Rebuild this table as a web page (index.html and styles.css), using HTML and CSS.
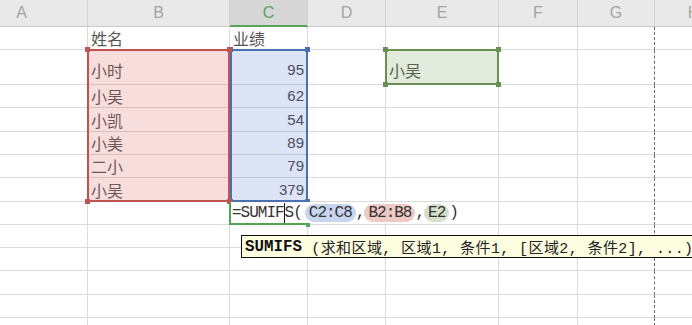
FILE: index.html
```html
<!DOCTYPE html>
<html lang="zh-CN">
<head>
<meta charset="utf-8">
<title>SUMIFS</title>
<link rel="stylesheet" href="styles.css">
</head>
<body>
<div class="sheet">
  <div class="cells">
    <div class="h">A</div><div class="h">B</div><div class="h on">C</div><div class="h">D</div><div class="h">E</div><div class="h">F</div><div class="h">G</div><div class="h">H</div>

    <div class="c"></div><div class="c">姓名</div><div class="c">业绩</div><div class="c"></div><div class="c"></div><div class="c"></div><div class="c"></div><div class="c"></div>
    <div class="c"></div><div class="c tall">小时</div><div class="c num tall">95</div><div class="c"></div><div class="c tall">小吴</div><div class="c"></div><div class="c"></div><div class="c"></div>
    <div class="c"></div><div class="c">小吴</div><div class="c num">62</div><div class="c"></div><div class="c"></div><div class="c"></div><div class="c"></div><div class="c"></div>
    <div class="c"></div><div class="c">小凯</div><div class="c num">54</div><div class="c"></div><div class="c"></div><div class="c"></div><div class="c"></div><div class="c"></div>
    <div class="c"></div><div class="c">小美</div><div class="c num">89</div><div class="c"></div><div class="c"></div><div class="c"></div><div class="c"></div><div class="c"></div>
    <div class="c"></div><div class="c">二小</div><div class="c num">79</div><div class="c"></div><div class="c"></div><div class="c"></div><div class="c"></div><div class="c"></div>
    <div class="c"></div><div class="c">小吴</div><div class="c num">379</div><div class="c"></div><div class="c"></div><div class="c"></div><div class="c"></div><div class="c"></div>
    <div class="c"></div><div class="c"></div><div class="c"></div><div class="c"></div><div class="c"></div><div class="c"></div><div class="c"></div><div class="c"></div>
    <div class="c"></div><div class="c"></div><div class="c"></div><div class="c"></div><div class="c"></div><div class="c"></div><div class="c"></div><div class="c"></div>
    <div class="c"></div><div class="c"></div><div class="c"></div><div class="c"></div><div class="c"></div><div class="c"></div><div class="c"></div><div class="c"></div>
    <div class="c"></div><div class="c"></div><div class="c"></div><div class="c"></div><div class="c"></div><div class="c"></div><div class="c"></div><div class="c"></div>
    <div class="c"></div><div class="c"></div><div class="c"></div><div class="c"></div><div class="c"></div><div class="c"></div><div class="c"></div><div class="c"></div>
    <div class="c"></div><div class="c"></div><div class="c"></div><div class="c"></div><div class="c"></div><div class="c"></div><div class="c"></div><div class="c"></div>
  </div>

  <div class="marks">
    <div class="rng blue"><i class="hdl tl"></i><i class="hdl tr"></i><i class="hdl bl"></i><i class="hdl br"></i></div>
    <div class="rng red"><i class="hdl tl"></i><i class="hdl tr"></i><i class="hdl bl"></i><i class="hdl br"></i></div>
    <div class="rng green"><i class="hdl tl"></i><i class="hdl tr"></i><i class="hdl bl"></i><i class="hdl br"></i></div>
    <div class="ed">
      <div class="fx">=SUMIF<span class="caret"></span>S(<span class="p pb first">C2:C8</span>,<span class="p pr">B2:B8</span>,<span class="p pg">E2</span>)</div>
      <i class="hdl ebr"></i>
    </div>
  </div>
</div>

<div class="tip"><b>SUMIFS</b>&nbsp;(求和区域, 区域1, 条件1, [区域2, 条件2], ...)</div>
</body>
</html>
```
FILE: styles.css
```css
html, body {
  margin: 0;
  padding: 0;
}

body {
  width: 692px;
  height: 325px;
  overflow: hidden;
  background: #ffffff;
  position: relative;
  font-family: "Noto Sans CJK SC", sans-serif;
}

.sheet {
  display: grid;
  margin-left: -44px;
  width: 780px;
}

.sheet > .cells,
.sheet > .marks {
  grid-area: 1 / 1;
  display: grid;
  grid-template-columns: 132px 142px 78px 78px 113px 79px 77px 78px;
  grid-template-rows: 27px 23px 35px 23px 24px 23px 23px 24px 23px 23px 23px 24px 23px 23px;
}

/* column headers */
.h {
  box-sizing: border-box;
  background: #e9e9e9;
  border-right: 1px solid #d4d4d4;
  border-bottom: 1px solid #cacaca;
  display: flex;
  align-items: center;
  justify-content: center;
  font-family: "Liberation Sans", sans-serif;
  font-size: 16px;
  color: #a4a4a4;
}

.h.on {
  background: #d7d7d7;
  color: #5c9f5c;
  border-bottom: 2px solid #56a556;
  padding-top: 1px;
}

/* data cells */
.c {
  box-sizing: border-box;
  border-right: 1px solid #dadada;
  border-bottom: 1px solid #dadada;
  display: flex;
  align-items: flex-end;
  padding: 0 0 1px 3px;
  font-size: 16px;
  line-height: 20px;
  color: #555555;
  white-space: nowrap;
}

.c.tall {
  padding-bottom: 4px;
}

.c.num {
  justify-content: flex-end;
  padding-right: 3px;
  font-family: "Liberation Sans", sans-serif;
  font-size: 15px;
  color: #4a4a4a;
}

.cells > .c:nth-child(8n+7) {
  border-right: 1px dashed #6a6a6a;
}

/* range highlights */
.rng {
  position: relative;
  box-sizing: border-box;
  border: 2px solid currentColor;
  margin: -1px 0 0 -1px;
}

.rng.blue {
  grid-column: 3;
  grid-row: 3 / 9;
  margin-left: 0;
  color: #4c6fae;
  background: rgba(70, 110, 200, 0.19);
}

.rng.red {
  grid-column: 2;
  grid-row: 3 / 9;
  color: #c0524f;
  background: rgba(215, 90, 85, 0.2);
}

.rng.green {
  grid-column: 5;
  grid-row: 3;
  color: #6a8f52;
  background: rgba(100, 150, 60, 0.18);
}

.hdl {
  position: absolute;
  width: 5px;
  height: 5px;
  background: currentColor;
}

.hdl.tl { left: -4px; top: -4px; }
.hdl.tr { right: -4px; top: -4px; }
.hdl.bl { left: -4px; bottom: -4px; }
.hdl.br { right: -4px; bottom: -4px; }

/* formula editor in C8 */
.ed {
  grid-column: 3;
  grid-row: 9;
  position: relative;
  box-sizing: border-box;
  margin-left: -1px;
  border-left: 2px solid #52a552;
  border-bottom: 2px solid #52a552;
  color: #52a552;
  display: flex;
  align-items: center;
  overflow: visible;
}

.hdl.ebr {
  right: -2px;
  bottom: -4px;
  width: 4px;
  height: 4px;
}

.fx {
  display: flex;
  align-items: center;
  height: 21px;
  padding: 0 6px 0 1px;
  background: #ffffff;
  white-space: nowrap;
  font-family: "Liberation Mono", "Noto Sans CJK SC", monospace;
  font-size: 16px;
  letter-spacing: -1px;
  color: #333333;
}

.caret {
  display: inline-block;
  width: 1px;
  height: 20px;
  background: #111111;
}

.p {
  border-radius: 9px;
  padding: 0 4px;
  line-height: 18px;
}

.p.first { margin-left: 3px; }
.pb { background: #c8d5ef; }
.pr { background: #efc9c5; }
.pg { background: #d3dfcb; }

/* function tooltip */
.tip {
  position: absolute;
  left: 241px;
  top: 235px;
  box-sizing: border-box;
  height: 23px;
  width: 480px;
  border: 1px solid #111111;
  background: #fdfde0;
  padding: 0 0 0 3px;
  display: flex;
  align-items: center;
  white-space: nowrap;
  font-family: "Liberation Mono", "Noto Sans CJK SC", monospace;
  font-size: 15px;
  letter-spacing: 0.4px;
  color: #222222;
}

.tip b {
  font-size: 15.8px;
  letter-spacing: 0;
  color: #111111;
}
```
